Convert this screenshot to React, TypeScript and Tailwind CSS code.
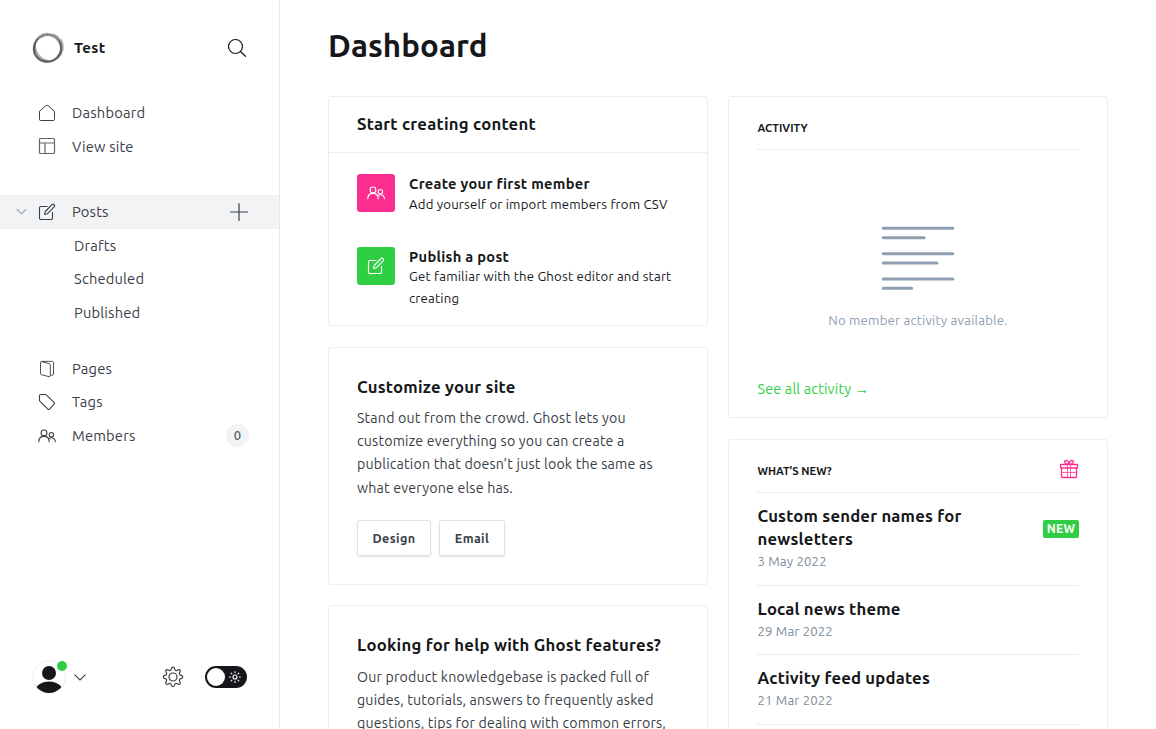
import React from "react";

type IconProps = { className?: string };

const UsersIcon = ({ className }: IconProps) => (
  <svg className={className} viewBox="0 0 18 18" fill="none" stroke="currentColor" strokeWidth="1.100" strokeLinecap="round">
    <circle cx="6" cy="5.900" r="2.900" />
    <path d="M.8 14.800c0-3.400 2.200-5.400 5.200-5.400s5.200 2 5.200 5.400" />
    <circle cx="13.400" cy="7.700" r="2.200" />
    <path d="M11.400 11.300c3-1.600 6 .3 6 3.500" />
  </svg>
);

const EditIcon = ({ className }: IconProps) => (
  <svg className={className} viewBox="0 0 18 18" fill="none" stroke="currentColor" strokeWidth="1.100" strokeLinecap="round" strokeLinejoin="round">
    <path d="M9 3.500H2.700a1.200 1.200 0 0 0-1.200 1.200v10.600c0 .7.5 1.200 1.200 1.200h10.600c.7 0 1.200-.5 1.200-1.200V9.200" />
    <path d="M6.600 11.500l.7-3L13.900 1.700c.6-.6 1.600-.6 2.200 0s.6 1.600 0 2.200L9.500 10.700z" />
  </svg>
);

const HomeIcon = () => (
  <svg className="size-[18px]" viewBox="0 0 18 18" fill="none" stroke="currentColor" strokeWidth="1" strokeLinejoin="round">
    <path d="M1.500 7.200L8.200 1.500c.5-.4 1.100-.4 1.600 0l6.700 5.700v8.300c0 .6-.4 1-1 1h-13c-.6 0-1-.4-1-1z" />
  </svg>
);

const LayoutIcon = () => (
  <svg className="size-[18px] opacity-80" viewBox="0 0 18 18" fill="none" stroke="currentColor" strokeWidth="1.200">
    <rect x="1.500" y="1.500" width="15" height="15" rx="1" />
    <path d="M1.500 6h15M7 6v10.500" />
  </svg>
);

const PagesIcon = () => (
  <svg className="size-[18px]" viewBox="0 0 18 18" fill="none" stroke="currentColor" strokeWidth=".9" strokeLinejoin="round">
    <path d="M2.500 2.500c0-.7.4-1 1-.8l7.800 2c.6.200 1 .6 1 1.200v10.900c0 .7-.5 1.100-1.200.9l-7.700-2c-.6-.2-.9-.5-.9-1.100z" />
    <path d="M3.200 1.600c.3-.2.500-.2.900-.2h10.200c.7 0 1.200.5 1.200 1.200v11.400c0 .7-.5 1.200-1.200 1.200h-2" />
  </svg>
);

const TagIcon = () => (
  <svg className="size-[18px]" viewBox="0 0 18 18" fill="none" stroke="currentColor" strokeWidth="1.100" strokeLinejoin="round">
    <path d="M1.500 2.500c0-.6.4-1 1-1h4.700c.4 0 .8.200 1.100.4l7.900 7.700c.5.500.5 1.100 0 1.600l-4.700 4.900c-.5.500-1.100.5-1.600 0L2 8.300c-.3-.3-.5-.7-.5-1.100z" />
  </svg>
);

const GearIcon = () => (
  <svg className="size-[22px]" viewBox="0 0 22 22" fill="none" stroke="#394047" strokeWidth="1.200" strokeLinejoin="round">
    <circle cx="11" cy="11" r="4" />
    <path d="M9.300 3.100C9.500 1.500 10 1.200 11 1.200s1.500.3 1.700 1.900c.2 1.300 1.500 1.900 2.600 1.100 1.300-1 1.900-.9 2.600-.2s.8 1.300-.2 2.600c-.8 1.100-.2 2.400 1.100 2.600 1.600.2 1.900.8 1.900 1.800s-.3 1.500-1.900 1.700c-1.300.2-1.900 1.500-1.100 2.600 1 1.300.9 1.900.2 2.600s-1.300.8-2.600-.2c-1.100-.8-2.400-.2-2.600 1.100-.2 1.600-.7 1.900-1.700 1.900s-1.500-.3-1.700-1.900c-.2-1.300-1.500-1.900-2.600-1.100-1.300 1-1.900.9-2.600.2s-.8-1.300.2-2.600c.8-1.100.2-2.400-1.100-2.600-1.600-.2-1.900-.7-1.900-1.700s.3-1.600 1.900-1.800c1.300-.2 1.900-1.500 1.100-2.600-1-1.300-.9-1.900-.2-2.600s1.300-.8 2.600.2c1.100.8 2.400.2 2.600-1.100z" />
  </svg>
);

const SunIcon = () => (
  <svg className="size-3" viewBox="0 0 12 12" fill="none" stroke="#fff" strokeWidth="1.100" strokeLinecap="round">
    <circle cx="6" cy="6" r="2" />
    <path d="M6 .6v1M6 10.400v1M.6 6h1M10.400 6h1M2.200 2.200l.7.7M9.100 9.100l.7.7M2.200 9.800l.7-.7M9.100 2.900l.7-.7" />
  </svg>
);

const GiftIcon = () => (
  <svg className="size-5" viewBox="0 0 20 20" fill="none" stroke="#fb2d8d" strokeWidth="1.300" strokeLinejoin="round">
    <rect x="1.500" y="5.500" width="17" height="3.500" rx=".6" />
    <path d="M2.500 9v8.800c0 .4.300.7.7.7h13.600c.4 0 .7-.3.700-.7V9" />
    <path d="M2.500 13.500h15M8.500 5.500v13M11.500 5.500v13" strokeWidth=".9" strokeOpacity=".8" />
    <path d="M10 5.300C7.200 5.300 5.300 4 5.600 2.500 6 .7 9.700 1.100 10 5.300c.3-4.200 4-4.600 4.400-2.800.3 1.500-1.600 2.800-4.400 2.800z" />
  </svg>
);

const Logo = () => (
  <svg className="size-8" viewBox="0 0 32 32" fill="none">
    <circle cx="15.500" cy="16.200" r="13.500" stroke="#777" strokeWidth="2" />
    <ellipse cx="15.200" cy="16.600" rx="14.200" ry="13" transform="rotate(-35 15.200 16.600)" stroke="#444" strokeOpacity=".5" strokeWidth="1.300" />
    <ellipse cx="16.600" cy="15.200" rx="14.300" ry="12.600" transform="rotate(50 16.600 15.200)" stroke="#555" strokeOpacity=".45" strokeWidth="1.400" />
    <path d="M21 2.800c5 2.200 7.500 5.500 8 10.700M28.500 7.500c3 6 2 12.500-3 17.500" stroke="#666" strokeOpacity=".5" strokeWidth="2.800" />
    <path d="M6 6.500c6-6 16-4.500 20.500 2.500" stroke="#999" strokeOpacity=".8" strokeWidth="2.200" />
    <path d="M3.500 10.500c-3 8 2 18 12 18.700" stroke="#444" strokeOpacity=".4" strokeWidth="1.800" />
  </svg>
);

function NavItem({ icon, children, className = "" }: { icon: React.ReactNode; children: React.ReactNode; className?: string }) {
  return (
    <a className={`flex h-[33.600px] items-center pl-[38px] pr-8 ${className}`}>
      {icon}
      <span className="ml-4 flex flex-1 items-center">{children}</span>
    </a>
  );
}

function Sidebar() {
  return (
    <nav className="flex h-full w-[280px] shrink-0 flex-col border-r border-[#e6e9eb] text-[14.700px] tracking-[0.180px] text-[#394047]">
      <div className="flex h-24 items-center pl-8 pr-8">
        <Logo />
        <span className="ml-[10px] flex-1 text-[15px] font-bold tracking-[0.350px] text-[#15171a]">Test</span>
        <svg className="size-5" viewBox="0 0 20 20" fill="none" stroke="#15171a" strokeWidth="1.200" strokeLinecap="round">
          <circle cx="8.500" cy="8.500" r="7" />
          <path d="M13.500 13.500l5 4.800" />
        </svg>
      </div>
      <NavItem icon={<HomeIcon />}>Dashboard</NavItem>
      <NavItem icon={<LayoutIcon />}><span className="pt-[1.200px]">View site</span></NavItem>
      <div className="mt-8 flex h-[33.600px] items-center bg-[#f1f3f4] pl-4 pr-[31px]">
        <svg className="size-[11px]" viewBox="0 0 11 11" fill="none" stroke="#98a5b0" strokeWidth="1.100" strokeLinecap="round">
          <path d="M1.200 3.500l4.300 4.300 4.300-4.300" />
        </svg>
        <EditIcon className="ml-[11px] size-[18px]" />
        <span className="ml-4 flex-1">Posts</span>
        <svg className="size-[18px]" viewBox="0 0 18 18" stroke="#394047" strokeWidth="1.200" strokeLinecap="round">
          <path d="M9 .6v16.800M.6 9h16.800" />
        </svg>
      </div>
      <a className="flex h-[33.600px] items-center pl-[74px]">Drafts</a>
      <a className="flex h-[33.600px] items-center pl-[74px]">Scheduled</a>
      <a className="flex h-[33.600px] items-center pl-[74px]">Published</a>
      <NavItem className="mt-[22.400px]" icon={<PagesIcon />}>Pages</NavItem>
      <NavItem icon={<TagIcon />}>Tags</NavItem>
      <NavItem icon={<UsersIcon className="size-[18px]" />}>
        <span className="flex-1">Members</span>
        <span className="-mr-[2px] flex size-[23px] items-center justify-center rounded-full bg-[#f1f3f4] text-[13px] font-medium tracking-normal text-[#54606c]">0</span>
      </NavItem>
      <div className="mt-auto flex h-[104px] items-center pl-8 pr-8">
        <div className="relative size-[34px]">
          <svg className="size-[34px]" viewBox="0 0 34 34">
            <defs>
              <clipPath id="avatar"><circle cx="17" cy="17" r="16" /></clipPath>
            </defs>
            <circle cx="17" cy="17" r="16.400" fill="#fff" stroke="#e6e9eb" strokeWidth=".8" />
            <circle cx="17" cy="13" r="7" fill="#15171a" />
            <ellipse cx="17" cy="32" rx="14" ry="10.500" fill="#15171a" clipPath="url(#avatar)" />
          </svg>
          <span className="absolute left-[25px] top-[1px] size-[10px] rounded-full bg-[#30cf43]" />
        </div>
        <svg className="ml-2 size-3" viewBox="0 0 12 12" fill="none" stroke="#394047" strokeWidth="1.100" strokeLinecap="round">
          <path d="M.8 3.800L6 9l5.200-5.200" />
        </svg>
        <span className="flex-1" />
        <GearIcon />
        <span className="ml-[21px] flex h-[22px] w-[42px] items-center justify-between rounded-full bg-[#15171a] pl-[2px] pr-[6px]">
          <span className="size-[18px] rounded-full bg-white" />
          <SunIcon />
        </span>
      </div>
    </nav>
  );
}

const title = "text-[16.700px] leading-6 font-bold tracking-[0.240px]";
const stepTitle = "text-[14.600px] leading-5 font-bold tracking-[0.300px]";
const body = "text-[14.200px] tracking-[0.190px] text-[#394047]";

function StartCard() {
  return (
    <section className="h-[230px] rounded-[3px] border border-[#ebeef0]">
      <div className="h-14 border-b border-[#ebeef0] pt-[15px] pl-7"><h2 className={title}>Start creating content</h2></div>
      <div className="flex pt-[21px] pl-7">
        <span className="flex size-[38px] items-center justify-center rounded-[3px] bg-[#fb2d8d] text-white"><UsersIcon className="size-[18px]" /></span>
        <div className="ml-[14px]">
          <h3 className={stepTitle}>Create your first member</h3>
          <p className="text-[13.200px] leading-[21px] tracking-[0.180px]">Add yourself or import members from CSV</p>
        </div>
      </div>
      <div className="flex pt-8 pl-7">
        <span className="flex size-[38px] items-center justify-center rounded-[3px] bg-[#30cf43] text-white"><EditIcon className="size-[18px]" /></span>
        <div className="ml-[14px]">
          <h3 className={stepTitle}>Publish a post</h3>
          <p className="-mt-[2px] text-[13.200px] leading-[22px] tracking-[0.190px]">Get familiar with the Ghost editor and start<br />creating</p>
        </div>
      </div>
    </section>
  );
}

const button = "flex h-9 items-center justify-center rounded-[2px] border border-[#dfe3e7] text-[12.600px] font-bold tracking-[0.390px] text-[#394047] shadow-[0_1px_2px_rgba(0,0,0,0.12)]";

function CustomizeCard() {
  return (
    <section className="mt-[21px] h-[238px] rounded-[3px] border border-[#ebeef0] pt-[27px] pl-7">
      <h2 className={title}>Customize your site</h2>
      <div className={`${body} mt-2 leading-[23px]`}>
        <p>
          Stand out from the crowd. Ghost lets you<br />
          customize everything so you can create a<br />
          publication that doesn’t just look the same as
        </p>
        <p className="pt-px">what everyone else has.</p>
      </div>
      <div className="mt-5 flex gap-2">
        <button className={`${button} w-[74px]`}>Design</button>
        <button className={`${button} w-[66px]`}>Email</button>
      </div>
    </section>
  );
}

function HelpCard() {
  return (
    <section className="mt-5 h-[238px] rounded-[3px] border border-[#ebeef0] pt-[27px] pl-7">
      <h2 className={title}>Looking for help with Ghost features?</h2>
      <p className={`${body} mt-[9px] leading-[23px]`}>
        Our product knowledgebase is packed full of<br />
        guides, tutorials, answers to frequently asked<br />
        questions, tips for dealing with common errors,
      </p>
    </section>
  );
}

const eyebrow = "pt-[22px] pl-[0.500px] text-[11.100px] leading-[18px] font-bold";

function ActivityCard() {
  return (
    <section className="flex h-[322px] flex-col rounded-[3px] border border-[#ebeef0] px-7">
      <h2 className={`${eyebrow} h-[53px] border-b border-[#ebeef0]`}>ACTIVITY</h2>
      <div className="flex flex-col items-center pt-[75px]">
        <svg className="h-[66px] w-[74px]" viewBox="0 0 74 66" stroke="#8f9eb0" strokeWidth="3" strokeLinecap="round">
          <path d="M2.200 3.300h69.600M2.200 12.700h41M2.200 28.700h69.600M2.200 38h53.800M2.200 54h69.600M2.200 63.300h28.500" />
        </svg>
        <p className="mt-[19px] text-[13.200px] leading-5 tracking-[0.190px] text-[#8f9eb0]">No member activity available.</p>
      </div>
      <a className="mt-auto mb-[18px] pl-[0.500px] text-[14.300px] leading-5 tracking-[0.200px] text-[#30cf43]">See all activity →</a>
    </section>
  );
}

const newsTitle = "pl-[0.500px] text-[16.700px] leading-[23px] font-bold tracking-[0.200px]";
const newsDate = "pl-[0.500px] text-[13.200px] leading-[23px] tracking-[0.140px] text-[#7c8b9a]";

function NewsCard() {
  return (
    <section className="mt-[21px] h-[420px] rounded-[3px] border border-[#ebeef0] px-7">
      <div className="flex h-[53px] items-start justify-between border-b border-[#ebeef0]">
        <h2 className={eyebrow}>WHAT'S NEW?</h2>
        <span className="mt-[19px]"><GiftIcon /></span>
      </div>
      <div className="flex h-[93px] items-start justify-between border-b border-[#ebeef0] pt-[11px]">
        <div>
          <h3 className={newsTitle}>Custom sender names for<br />newsletters</h3>
          <p className={newsDate}>3 May 2022</p>
        </div>
        <span className="mt-4 flex h-[18px] w-9 items-center justify-center rounded-[2px] bg-[#30cf43] text-[12.100px] font-bold tracking-[0.300px] text-white">NEW</span>
      </div>
      <div className="h-[69px] border-b border-[#ebeef0] pt-[11px]">
        <h3 className={newsTitle}>Local news theme</h3>
        <p className={newsDate}>29 Mar 2022</p>
      </div>
      <div className="h-[70px] border-b border-[#ebeef0] pt-[11px]">
        <h3 className={newsTitle}>Activity feed updates</h3>
        <p className={newsDate}>21 Mar 2022</p>
      </div>
    </section>
  );
}

export default function App() {
  return (
    <div className="flex h-[729px] w-[1156px] overflow-hidden bg-white font-['Ubuntu','Noto_Sans',sans-serif] whitespace-nowrap text-[#15171a]">
      <Sidebar />
      <main className="flex-1 px-12">
        <h1 className="h-24 pt-[25px] text-[31.300px] leading-[42px] font-bold tracking-[0.080px]">Dashboard</h1>
        <div className="grid grid-cols-2 gap-5">
          <div><StartCard /><CustomizeCard /><HelpCard /></div>
          <div><ActivityCard /><NewsCard /></div>
        </div>
      </main>
    </div>
  );
}
